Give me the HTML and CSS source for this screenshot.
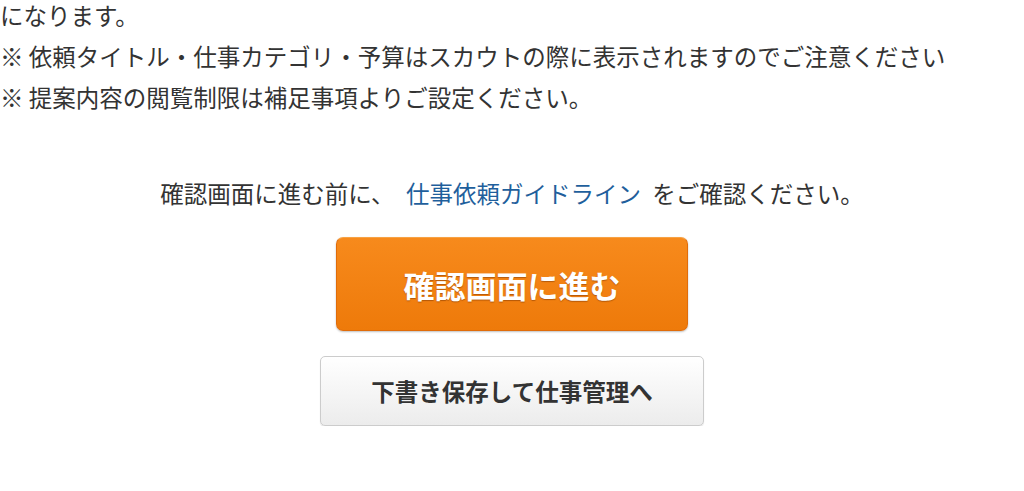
FILE: index.html
```html
<!DOCTYPE html>
<html lang="ja">
<head>
<meta charset="UTF-8">
<meta name="viewport" content="width=device-width, initial-scale=1.0">
<title>仕事依頼</title>
<link rel="stylesheet" href="styles.css">
</head>
<body>

    <div class="notes">
        <p class="notes-first">になります。</p>
        <p>※ 依頼タイトル・仕事カテゴリ・予算はスカウトの際に表示されますのでご注意ください</p>
        <p>※ 提案内容の閲覧制限は補足事項よりご設定ください。</p>
    </div>

    <div class="submit-area">
        <p class="guide">確認画面に進む前に、 <a href="#guideline">仕事依頼ガイドライン</a> をご確認ください。</p>
        <button class="confirm-button">確認画面に進む</button>
        <button class="draft-button">下書き保存して仕事管理へ</button>
    </div>

</body>
</html>
```

FILE: styles.css
```css
body {
    margin: 0;
    background-color: #ffffff;
    color: #333333;
    font-family: "Noto Sans CJK JP", "Noto Sans", sans-serif;
    font-size: 23.5px;
}

p {
    margin: 0;
}

.notes {
    line-height: 41px;
}

.notes-first {
    line-height: 30px;
    margin-bottom: 6px;
}

.submit-area {
    margin-top: 55px;
    display: flex;
    flex-direction: column;
    align-items: center;
}

.guide {
    line-height: 41px;
    word-spacing: 6px;
}

.guide a {
    color: #1f5f9c;
    text-decoration: none;
}

.confirm-button {
    margin-top: 23px;
    width: 352px;
    height: 94px;
    border: 1px solid #e06c0a;
    border-top-color: #f7a244;
    border-radius: 7px;
    background: linear-gradient(#f78a1c, #ee7a0a);
    box-shadow: 0 1px 2px rgba(0, 0, 0, 0.25);
    color: #ffffff;
    font-family: inherit;
    font-size: 31px;
    font-weight: bold;
    text-shadow: 0 1px 1px rgba(120, 50, 0, 0.5);
    cursor: pointer;
}

.draft-button {
    margin-top: 25px;
    width: 384px;
    height: 70px;
    border: 1px solid #cccccc;
    border-radius: 5px;
    background: linear-gradient(#ffffff, #ececec);
    box-shadow: 0 1px 1px rgba(0, 0, 0, 0.12);
    color: #333333;
    font-family: inherit;
    font-size: 23.5px;
    font-weight: bold;
    cursor: pointer;
}
```
